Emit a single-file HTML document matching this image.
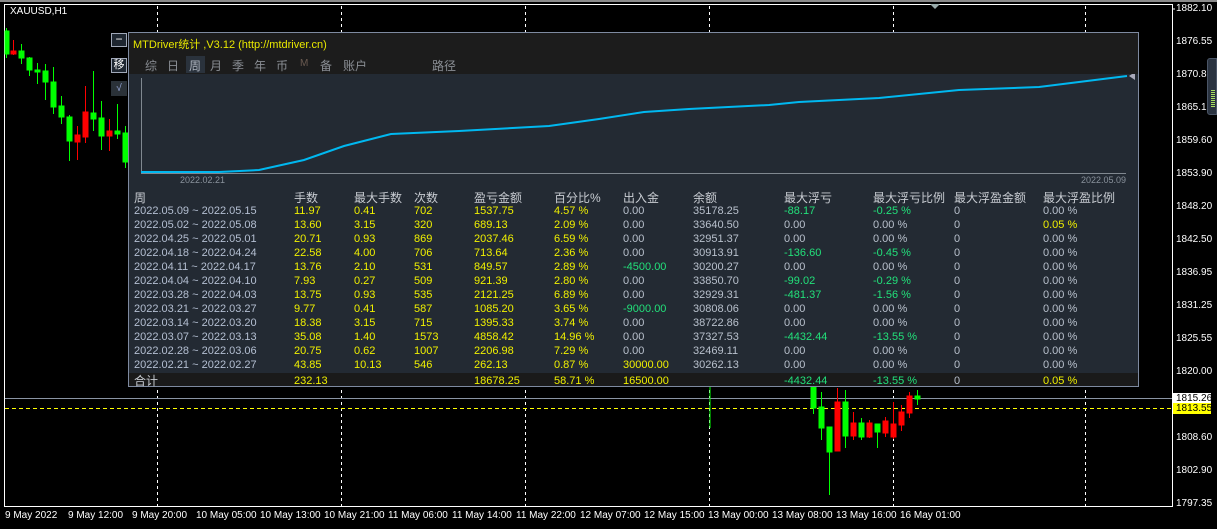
<!DOCTYPE html>
<html><head><meta charset="utf-8"><style>
*{margin:0;padding:0;box-sizing:border-box}
body{width:1217px;height:529px;background:#000;position:relative;overflow:hidden;font-family:"Liberation Sans","Noto Sans CJK SC",sans-serif;font-size:11px}
.a{position:absolute;white-space:nowrap}
.pl{position:absolute;left:1176px;color:#fff;font-size:10px;line-height:12px}
.tl{position:absolute;top:510px;color:#fff;font-size:10px;line-height:12px}
.r{position:absolute;height:14px;line-height:14px;left:0;width:1010px}
.r span{position:absolute;top:0}
.d{color:#b4bfd2}.y{color:#f0f000}.g{color:#b8c0cc}.gr{color:#22e07a}
.h span{color:#c8ccd2;font-size:12px}
</style></head><body>
<!-- chart frame -->
<div class="a" style="left:0;top:0;width:1217px;height:2px;background:#8a8a8a"></div>
<div class="a" style="left:4px;top:4px;width:1169px;height:503px;border:1px solid #fff;border-bottom:1px solid #fff"></div>
<div class="a" style="left:10px;top:6px;color:#fff;font-size:10px">XAUUSD,H1</div>
<svg class="a" style="left:0;top:0" width="1217" height="529">
<g stroke="#fff" stroke-dasharray="3,3" stroke-width="1">
<line x1="157.5" y1="6" x2="157.5" y2="506"/><line x1="341.5" y1="6" x2="341.5" y2="506"/><line x1="525.5" y1="6" x2="525.5" y2="506"/><line x1="709.5" y1="6" x2="709.5" y2="506"/><line x1="893.5" y1="6" x2="893.5" y2="506"/><line x1="1085.5" y1="6" x2="1085.5" y2="506"/>
</g>
<line x1="5" y1="398.5" x2="1172" y2="398.5" stroke="#8a94a4"/>
<line x1="5" y1="408.5" x2="1172" y2="408.5" stroke="#ffff00" stroke-dasharray="4,3"/>
<polygon points="930,4 940,4 935,9" fill="#9aa"/>
<!-- left candles -->
<g stroke-width="1">
<g stroke="#0f0" fill="#0f0">
<line x1="6.5" y1="28" x2="6.5" y2="58"/><rect x="5" y="31" width="4" height="23"/>
<line x1="21.5" y1="44" x2="21.5" y2="64"/><rect x="19" y="51" width="5" height="7"/>
<line x1="29.5" y1="57" x2="29.5" y2="76"/><rect x="27" y="58" width="5" height="12"/>
<line x1="37.5" y1="63" x2="37.5" y2="84"/><rect x="35" y="70" width="5" height="2"/>
<line x1="45.5" y1="64" x2="45.5" y2="100"/><rect x="43" y="71" width="5" height="11"/>
<line x1="53.5" y1="67" x2="53.5" y2="114"/><rect x="51" y="82" width="5" height="25"/>
<line x1="61.5" y1="96" x2="61.5" y2="124"/><rect x="59" y="106" width="5" height="11"/>
<line x1="69.5" y1="115" x2="69.5" y2="161"/><rect x="67" y="117" width="5" height="24"/>
<line x1="93.5" y1="71" x2="93.5" y2="131"/><rect x="91" y="113" width="5" height="6"/>
<line x1="101.5" y1="101" x2="101.5" y2="150"/><rect x="99" y="118" width="5" height="18"/>
<line x1="117.5" y1="104" x2="117.5" y2="139"/><rect x="115" y="131" width="5" height="3"/>
<line x1="125.5" y1="126" x2="125.5" y2="168"/><rect x="123" y="133" width="5" height="29"/>
</g>
<g stroke="#f00" fill="#f00">
<line x1="13.5" y1="40" x2="13.5" y2="55"/><rect x="11" y="51" width="5" height="3"/>
<line x1="77.5" y1="126" x2="77.5" y2="160"/><rect x="75" y="135" width="5" height="7"/>
<line x1="85.5" y1="86" x2="85.5" y2="143"/><rect x="83" y="112" width="5" height="25"/>
<line x1="109.5" y1="119" x2="109.5" y2="151"/><rect x="107" y="131" width="5" height="5"/>
</g>
<!-- bottom candles -->
<g stroke="#0f0" fill="#0f0">
<line x1="813.5" y1="386" x2="813.5" y2="414"/><rect x="811" y="386" width="5" height="22"/>
<line x1="821.5" y1="392" x2="821.5" y2="440"/><rect x="819" y="407" width="5" height="21"/>
<line x1="829.5" y1="427" x2="829.5" y2="495"/><rect x="827" y="427" width="5" height="25"/>
<line x1="845.5" y1="390" x2="845.5" y2="448"/><rect x="843" y="402" width="5" height="34"/>
<line x1="861.5" y1="418" x2="861.5" y2="440"/><rect x="859" y="423" width="5" height="14"/>
<line x1="877.5" y1="424" x2="877.5" y2="448"/><rect x="875" y="424" width="5" height="8"/>
<line x1="917.5" y1="390" x2="917.5" y2="405"/><rect x="915" y="396" width="5" height="3"/>
</g>
<g stroke="#f00" fill="#f00">
<line x1="837.5" y1="388" x2="837.5" y2="451"/><rect x="835" y="402" width="5" height="49"/>
<line x1="853.5" y1="412" x2="853.5" y2="440"/><rect x="851" y="423" width="5" height="13"/>
<line x1="869.5" y1="420" x2="869.5" y2="438"/><rect x="867" y="423" width="5" height="14"/>
<line x1="885.5" y1="417" x2="885.5" y2="437"/><rect x="883" y="421" width="5" height="12"/>
<line x1="893.5" y1="402" x2="893.5" y2="439"/><rect x="891" y="424" width="5" height="13"/>
<line x1="901.5" y1="405" x2="901.5" y2="431"/><rect x="899" y="412" width="5" height="13"/>
<line x1="909.5" y1="392" x2="909.5" y2="418"/><rect x="907" y="396" width="5" height="17"/>
</g>
<line x1="710" y1="386" x2="710" y2="428" stroke="#0f0"/>
</g>
<!-- axis ticks -->
<g stroke="#fff"><line x1="1172" y1="9" x2="1175" y2="9"/></g>
</svg>
<!-- price axis -->
<div class="pl" style="top:3px">1882.10</div><div class="pl" style="top:36px">1876.55</div><div class="pl" style="top:69px">1870.85</div><div class="pl" style="top:102px">1865.15</div><div class="pl" style="top:135px">1859.60</div><div class="pl" style="top:168px">1853.90</div><div class="pl" style="top:201px">1848.20</div><div class="pl" style="top:234px">1842.50</div><div class="pl" style="top:267px">1836.95</div><div class="pl" style="top:300px">1831.25</div><div class="pl" style="top:333px">1825.55</div><div class="pl" style="top:366px">1820.00</div><div class="pl" style="top:432px">1808.60</div><div class="pl" style="top:465px">1802.90</div><div class="pl" style="top:498px">1797.35</div>
<div class="a" style="left:1173px;top:393px;width:38px;height:11px;background:#fff;color:#000;font-size:10px;line-height:11px;padding-left:3px">1815.26</div>
<div class="a" style="left:1173px;top:403px;width:38px;height:11px;background:#ff0;color:#000;font-size:10px;line-height:11px;padding-left:3px">1813.55</div>
<div class="a" style="left:1207px;top:58px;width:10px;height:57px;background:#2a3340;border-radius:3px 0 0 3px;border:1px solid #4a5566"></div>
<div class="a" style="left:1211px;top:90px;width:4px;height:18px;background:repeating-linear-gradient(#a8e060 0 1px,transparent 1px 2px)"></div>
<!-- time axis -->
<div class="tl" style="left:5px">9 May 2022</div><div class="tl" style="left:68px">9 May 12:00</div><div class="tl" style="left:132px">9 May 20:00</div><div class="tl" style="left:196px">10 May 05:00</div><div class="tl" style="left:260px">10 May 13:00</div><div class="tl" style="left:324px">10 May 21:00</div><div class="tl" style="left:388px">11 May 06:00</div><div class="tl" style="left:452px">11 May 14:00</div><div class="tl" style="left:516px">11 May 22:00</div><div class="tl" style="left:580px">12 May 07:00</div><div class="tl" style="left:644px">12 May 15:00</div><div class="tl" style="left:708px">13 May 00:00</div><div class="tl" style="left:772px">13 May 08:00</div><div class="tl" style="left:836px">13 May 16:00</div><div class="tl" style="left:900px">16 May 01:00</div>
<!-- left buttons -->
<div class="a" style="left:111px;top:33px;width:16px;height:14px;border:1px solid #a0a8b8;background:#1e2630;color:#fff;text-align:center;line-height:11px;font-size:12px">−</div>
<div class="a" style="left:111px;top:58px;width:16px;height:15px;border:1px solid #a0a8b8;background:#1e2630;color:#fff;text-align:center;line-height:13px;font-size:11px">移</div>
<div class="a" style="left:111px;top:81px;width:16px;height:15px;background:#2a3138;color:#9ad;text-align:center;line-height:15px;font-size:10px">√</div>
<!-- panel -->
<div class="a" style="left:128px;top:32px;width:1011px;height:355px;background:#232a33;border:1px solid #7e8aa0"></div>
<div class="a" style="left:129px;top:33px;width:1009px;height:41px;background:#1c1c1c"></div>
<div class="a" style="left:133px;top:36px;color:#e8e800;font-size:11px">MTDriver统计 ,V3.12 (http://mtdriver.cn)</div>
<div class="a" style="left:186px;top:56px;width:19px;height:17px;background:#2a323c"></div>
<div class="a" style="left:145px;top:57px;color:#8a8e94;font-size:12px;letter-spacing:0">
<span style="position:absolute;left:0">综</span><span style="position:absolute;left:22px">日</span><span style="position:absolute;left:44px;color:#b0b6c0">周</span><span style="position:absolute;left:65px">月</span><span style="position:absolute;left:87px">季</span><span style="position:absolute;left:109px">年</span><span style="position:absolute;left:131px">币</span><span style="position:absolute;left:155px;font-size:10px;top:1px;color:#6a5a50">M</span><span style="position:absolute;left:175px">备</span><span style="position:absolute;left:198px">账户</span><span style="position:absolute;left:287px">路径</span></div>
<svg class="a" style="left:129px;top:74px" width="1009" height="112">
<line x1="12.5" y1="4" x2="12.5" y2="100" stroke="#808890"/>
<line x1="12" y1="99.5" x2="997" y2="99.5" stroke="#808890"/>
<polyline fill="none" stroke="#00b8f0" stroke-width="2" points="12,98 90,98 130,96 175,86 215,72 262,60 330,57 420,52 470,45 515,38 560,35 640,31 670,28 750,24 830,16 910,13 998,2"/>
<polygon points="1000,2 1006,-2 1006,6" fill="#aab"/>
</svg>
<div class="a" style="left:180px;top:175px;color:#8a929c;font-size:9px">2022.02.21</div>
<div class="a" style="left:1081px;top:175px;color:#8a929c;font-size:9px">2022.05.09</div>
<!-- table -->
<div class="a" style="left:128px;top:190px;width:1010px;height:196px">
<div class="r h" style="top:1px"><span style="left:6px">周</span><span style="left:166px">手数</span><span style="left:226px">最大手数</span><span style="left:286px">次数</span><span style="left:346px">盈亏金额</span><span style="left:426px">百分比%</span><span style="left:495px">出入金</span><span style="left:565px">余额</span><span style="left:656px">最大浮亏</span><span style="left:745px">最大浮亏比例</span><span style="left:826px">最大浮盈金额</span><span style="left:915px">最大浮盈比例</span></div>
</div>
<div class="a" style="left:129px;top:373px;width:1009px;height:13px;background:#1a1a1a"></div>
<div class="a" id="t" style="left:128px;top:204px;width:1010px;height:190px">
<div class="r" style="top:0"><span class="d" style="left:6px">2022.05.09 ~ 2022.05.15</span><span class="y" style="left:166px">11.97</span><span class="y" style="left:226px">0.41</span><span class="y" style="left:286px">702</span><span class="y" style="left:346px">1537.75</span><span class="y" style="left:426px">4.57 %</span><span class="g" style="left:495px">0.00</span><span class="g" style="left:565px">35178.25</span><span class="gr" style="left:656px">-88.17</span><span class="gr" style="left:745px">-0.25 %</span><span class="g" style="left:826px">0</span><span class="g" style="left:915px">0.00 %</span></div>
<div class="r" style="top:14px"><span class="d" style="left:6px">2022.05.02 ~ 2022.05.08</span><span class="y" style="left:166px">13.60</span><span class="y" style="left:226px">3.15</span><span class="y" style="left:286px">320</span><span class="y" style="left:346px">689.13</span><span class="y" style="left:426px">2.09 %</span><span class="g" style="left:495px">0.00</span><span class="g" style="left:565px">33640.50</span><span class="g" style="left:656px">0.00</span><span class="g" style="left:745px">0.00 %</span><span class="g" style="left:826px">0</span><span class="y" style="left:915px">0.05 %</span></div>
<div class="r" style="top:28px"><span class="d" style="left:6px">2022.04.25 ~ 2022.05.01</span><span class="y" style="left:166px">20.71</span><span class="y" style="left:226px">0.93</span><span class="y" style="left:286px">869</span><span class="y" style="left:346px">2037.46</span><span class="y" style="left:426px">6.59 %</span><span class="g" style="left:495px">0.00</span><span class="g" style="left:565px">32951.37</span><span class="g" style="left:656px">0.00</span><span class="g" style="left:745px">0.00 %</span><span class="g" style="left:826px">0</span><span class="g" style="left:915px">0.00 %</span></div>
<div class="r" style="top:42px"><span class="d" style="left:6px">2022.04.18 ~ 2022.04.24</span><span class="y" style="left:166px">22.58</span><span class="y" style="left:226px">4.00</span><span class="y" style="left:286px">706</span><span class="y" style="left:346px">713.64</span><span class="y" style="left:426px">2.36 %</span><span class="g" style="left:495px">0.00</span><span class="g" style="left:565px">30913.91</span><span class="gr" style="left:656px">-136.60</span><span class="gr" style="left:745px">-0.45 %</span><span class="g" style="left:826px">0</span><span class="g" style="left:915px">0.00 %</span></div>
<div class="r" style="top:56px"><span class="d" style="left:6px">2022.04.11 ~ 2022.04.17</span><span class="y" style="left:166px">13.76</span><span class="y" style="left:226px">2.10</span><span class="y" style="left:286px">531</span><span class="y" style="left:346px">849.57</span><span class="y" style="left:426px">2.89 %</span><span class="gr" style="left:495px">-4500.00</span><span class="g" style="left:565px">30200.27</span><span class="g" style="left:656px">0.00</span><span class="g" style="left:745px">0.00 %</span><span class="g" style="left:826px">0</span><span class="g" style="left:915px">0.00 %</span></div>
<div class="r" style="top:70px"><span class="d" style="left:6px">2022.04.04 ~ 2022.04.10</span><span class="y" style="left:166px">7.93</span><span class="y" style="left:226px">0.27</span><span class="y" style="left:286px">509</span><span class="y" style="left:346px">921.39</span><span class="y" style="left:426px">2.80 %</span><span class="g" style="left:495px">0.00</span><span class="g" style="left:565px">33850.70</span><span class="gr" style="left:656px">-99.02</span><span class="gr" style="left:745px">-0.29 %</span><span class="g" style="left:826px">0</span><span class="g" style="left:915px">0.00 %</span></div>
<div class="r" style="top:84px"><span class="d" style="left:6px">2022.03.28 ~ 2022.04.03</span><span class="y" style="left:166px">13.75</span><span class="y" style="left:226px">0.93</span><span class="y" style="left:286px">535</span><span class="y" style="left:346px">2121.25</span><span class="y" style="left:426px">6.89 %</span><span class="g" style="left:495px">0.00</span><span class="g" style="left:565px">32929.31</span><span class="gr" style="left:656px">-481.37</span><span class="gr" style="left:745px">-1.56 %</span><span class="g" style="left:826px">0</span><span class="g" style="left:915px">0.00 %</span></div>
<div class="r" style="top:98px"><span class="d" style="left:6px">2022.03.21 ~ 2022.03.27</span><span class="y" style="left:166px">9.77</span><span class="y" style="left:226px">0.41</span><span class="y" style="left:286px">587</span><span class="y" style="left:346px">1085.20</span><span class="y" style="left:426px">3.65 %</span><span class="gr" style="left:495px">-9000.00</span><span class="g" style="left:565px">30808.06</span><span class="g" style="left:656px">0.00</span><span class="g" style="left:745px">0.00 %</span><span class="g" style="left:826px">0</span><span class="g" style="left:915px">0.00 %</span></div>
<div class="r" style="top:112px"><span class="d" style="left:6px">2022.03.14 ~ 2022.03.20</span><span class="y" style="left:166px">18.38</span><span class="y" style="left:226px">3.15</span><span class="y" style="left:286px">715</span><span class="y" style="left:346px">1395.33</span><span class="y" style="left:426px">3.74 %</span><span class="g" style="left:495px">0.00</span><span class="g" style="left:565px">38722.86</span><span class="g" style="left:656px">0.00</span><span class="g" style="left:745px">0.00 %</span><span class="g" style="left:826px">0</span><span class="g" style="left:915px">0.00 %</span></div>
<div class="r" style="top:126px"><span class="d" style="left:6px">2022.03.07 ~ 2022.03.13</span><span class="y" style="left:166px">35.08</span><span class="y" style="left:226px">1.40</span><span class="y" style="left:286px">1573</span><span class="y" style="left:346px">4858.42</span><span class="y" style="left:426px">14.96 %</span><span class="g" style="left:495px">0.00</span><span class="g" style="left:565px">37327.53</span><span class="gr" style="left:656px">-4432.44</span><span class="gr" style="left:745px">-13.55 %</span><span class="g" style="left:826px">0</span><span class="g" style="left:915px">0.00 %</span></div>
<div class="r" style="top:140px"><span class="d" style="left:6px">2022.02.28 ~ 2022.03.06</span><span class="y" style="left:166px">20.75</span><span class="y" style="left:226px">0.62</span><span class="y" style="left:286px">1007</span><span class="y" style="left:346px">2206.98</span><span class="y" style="left:426px">7.29 %</span><span class="g" style="left:495px">0.00</span><span class="g" style="left:565px">32469.11</span><span class="g" style="left:656px">0.00</span><span class="g" style="left:745px">0.00 %</span><span class="g" style="left:826px">0</span><span class="g" style="left:915px">0.00 %</span></div>
<div class="r" style="top:154px"><span class="d" style="left:6px">2022.02.21 ~ 2022.02.27</span><span class="y" style="left:166px">43.85</span><span class="y" style="left:226px">10.13</span><span class="y" style="left:286px">546</span><span class="y" style="left:346px">262.13</span><span class="y" style="left:426px">0.87 %</span><span class="y" style="left:495px">30000.00</span><span class="g" style="left:565px">30262.13</span><span class="g" style="left:656px">0.00</span><span class="g" style="left:745px">0.00 %</span><span class="g" style="left:826px">0</span><span class="g" style="left:915px">0.00 %</span></div>
<div class="r" style="top:170px"><span style="left:6px;color:#c8ccd2;font-size:12px">合计</span><span class="y" style="left:166px">232.13</span><span class="y" style="left:346px">18678.25</span><span class="y" style="left:426px">58.71 %</span><span class="y" style="left:495px">16500.00</span><span class="gr" style="left:656px">-4432.44</span><span class="gr" style="left:745px">-13.55 %</span><span class="g" style="left:826px">0</span><span class="y" style="left:915px">0.05 %</span></div>
</div>
</body></html>
